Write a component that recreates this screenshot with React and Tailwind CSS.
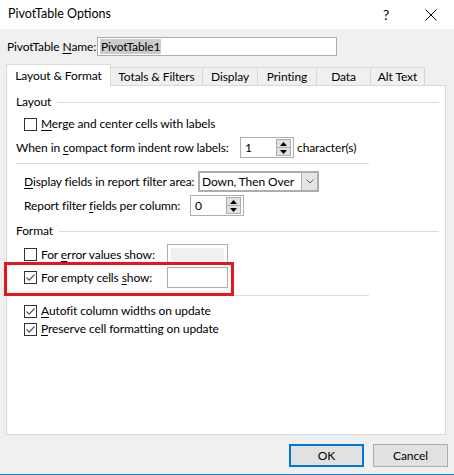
import React from "react";

const U = ({ children }) => <span className="underline underline-offset-2">{children}</span>;

function Check({ checked }) {
  return (
    <div className="w-[13px] h-[13px] border border-[#333333] bg-white flex items-center justify-center shrink-0">
      {checked && (
        <svg width="11" height="11" viewBox="0 0 11 11">
          <path d="M1.5 5.5 L4.2 8.2 L9.5 2.5" fill="none" stroke="#555555" strokeWidth="1.2" />
        </svg>
      )}
    </div>
  );
}

function Spinner({ value, className }) {
  return (
    <div className={"h-[21px] border border-[#adadad] bg-white flex items-center shrink-0 " + className}>
      <span className="pl-[4px] flex-1 leading-none">{value}</span>
      <div className="w-[15px] h-[17px] mr-[2px] flex flex-col border border-[#adadad] bg-[#e1e1e1]">
        <div className="flex-1 flex items-center justify-center border-b border-[#adadad]">
          <svg width="7" height="4" viewBox="0 0 7 4"><path d="M0 4 L3.5 0 L7 4 Z" fill="#000" /></svg>
        </div>
        <div className="flex-1 flex items-center justify-center">
          <svg width="7" height="4" viewBox="0 0 7 4"><path d="M0 0 L3.5 4 L7 0 Z" fill="#000" /></svg>
        </div>
      </div>
    </div>
  );
}

function Tab({ label, w, active }) {
  if (active) {
    return (
      <div className={"h-[22px] shrink-0 border border-b-0 border-[#d9d9d9] bg-white flex items-center justify-center relative z-10 -mb-px " + w}>
        {label}
      </div>
    );
  }
  return (
    <div className={"h-[18px] shrink-0 -ml-px border border-b-0 border-[#d9d9d9] bg-[#f0f0f0] flex items-center justify-center " + w}>
      {label}
    </div>
  );
}

export default function App() {
  return (
    <div
      className="w-[454px] h-[475px] bg-[#f0f0f0] flex flex-col relative text-[12px] tracking-[-0.1px] text-black overflow-hidden whitespace-nowrap"
      style={{ fontFamily: 'Lato, "Liberation Sans", sans-serif' }}
    >
      {/* Title bar */}
      <div className="h-[29px] bg-white flex items-center shrink-0">
        <span className="pl-[8px] text-[12.5px] tracking-normal flex-1">PivotTable Options</span>
        <span className="text-[14px] w-[20px] text-center mr-[29px]">?</span>
        <svg width="12" height="12" viewBox="0 0 12 12" className="mr-[17px]">
          <path d="M0.5 0.5 L11.5 11.5 M11.5 0.5 L0.5 11.5" stroke="#000" strokeWidth="1" />
        </svg>
      </div>

      {/* Body */}
      <div className="flex flex-col pl-[6px] flex-1">
        {/* Name row */}
        <div className="flex items-center mt-[8px] h-[19px]">
          <span className="pl-[1px] w-[91px] shrink-0">PivotTable <U>N</U>ame:</span>
          <div className="w-[240px] h-[19px] border border-[#adadad] bg-white flex items-center pl-[2px]">
            <span className="bg-[#cccccc] px-[1px] leading-[15px]">PivotTable1</span>
          </div>
        </div>

        {/* Tabs */}
        <div className="flex items-end mt-[8px] h-[21px]">
          <Tab label="Layout & Format" w="w-[105px]" active />
          <Tab label="Totals & Filters" w="w-[93px]" />
          <Tab label="Display" w="w-[56px]" />
          <Tab label="Printing" w="w-[60px]" />
          <Tab label="Data" w="w-[55px]" />
          <Tab label="Alt Text" w="w-[55px]" />
        </div>

        {/* Panel */}
        <div className="w-[440px] h-[350px] border border-[#d9d9d9] bg-white flex flex-col pl-[9px]">
          {/* Layout heading */}
          <div className="flex items-center h-[16px] mt-[8px]">
            <span>Layout</span>
            <div className="flex-1 h-px bg-[#dcdcdc] ml-[6px] mr-[6px]" />
          </div>
          <div className="flex items-center h-[14px] mt-[7px] pl-[8px] gap-[4px]">
            <Check />
            <span><U>M</U>erge and center cells with labels</span>
          </div>
          <div className="flex items-center h-[21px] mt-[6px]">
            <span className="w-[224px] shrink-0">When in <U>c</U>ompact form indent row labels:</span>
            <Spinner value="1" className="w-[54px]" />
            <span className="ml-[3px]">character(s)</span>
          </div>
          <div className="h-px w-[353px] bg-[#dcdcdc] mt-[5px]" />
          <div className="flex items-center h-[21px] mt-[7px] pl-[8px]">
            <span className="w-[174px] shrink-0"><U>D</U>isplay fields in report filter area:</span>
            <div className="w-[121px] h-[21px] border-2 border-[#adadad] bg-white flex items-center shrink-0">
              <span className="pl-[2px] flex-1">Down, Then Over</span>
              <div className="w-[16px] h-full bg-[#e5e5e5] flex items-center justify-center border-l border-[#adadad]">
                <svg width="8" height="5" viewBox="0 0 8 5"><path d="M0.5 0.5 L4 4 L7.5 0.5" fill="none" stroke="#555" strokeWidth="1" /></svg>
              </div>
            </div>
          </div>
          <div className="flex items-center h-[21px] mt-[3px] pl-[8px]">
            <span className="w-[166px] shrink-0">Report filter <U>f</U>ields per column:</span>
            <Spinner value="0" className="w-[54px]" />
          </div>

          {/* Format heading */}
          <div className="flex items-center h-[16px] mt-[7px]">
            <span>Format</span>
            <div className="flex-1 h-px bg-[#dcdcdc] ml-[6px] mr-[6px]" />
          </div>
          <div className="flex items-center h-[21px] mt-[5px] pl-[8px]">
            <Check />
            <span className="ml-[4px] w-[126px] shrink-0">For <U>e</U>rror values show:</span>
            <div className="w-[61px] h-[21px] border border-[#adadad] bg-white p-[3px] shrink-0">
              <div className="w-full h-full bg-[#f0f0f0]" />
            </div>
          </div>
          <div className="flex items-center h-[21px] mt-[2px] pl-[8px]">
            <Check checked />
            <span className="ml-[4px] w-[126px] shrink-0">For empty cells <U>s</U>how:</span>
            <div className="w-[61px] h-[21px] border border-[#adadad] bg-white shrink-0" />
          </div>
          <div className="h-px w-[353px] bg-[#dcdcdc] mt-[7px]" />
          <div className="flex items-center h-[14px] mt-[8px] pl-[8px] gap-[4px]">
            <Check checked />
            <span><U>A</U>utofit column widths on update</span>
          </div>
          <div className="flex items-center h-[14px] mt-[4px] pl-[8px] gap-[4px]">
            <Check checked />
            <span><U>P</U>reserve cell formatting on update</span>
          </div>
        </div>

        {/* Buttons */}
        <div className="flex items-center mt-[9px] h-[23px] pl-[283px] gap-[9px]">
          <div className="w-[75px] h-[23px] border-2 border-[#0078d7] bg-[#e1e1e1] flex items-center justify-center">OK</div>
          <div className="w-[75px] h-[23px] border border-[#adadad] bg-[#e1e1e1] flex items-center justify-center">Cancel</div>
        </div>
      </div>

      {/* bottom blue edge */}
      <div className="h-px bg-[#1883d7] shrink-0" />

      {/* Red highlight box */}
      <div className="absolute left-[4px] top-[262px] w-[230px] h-[34px] border-[3px] border-[#e8141f]" />
    </div>
  );
}
